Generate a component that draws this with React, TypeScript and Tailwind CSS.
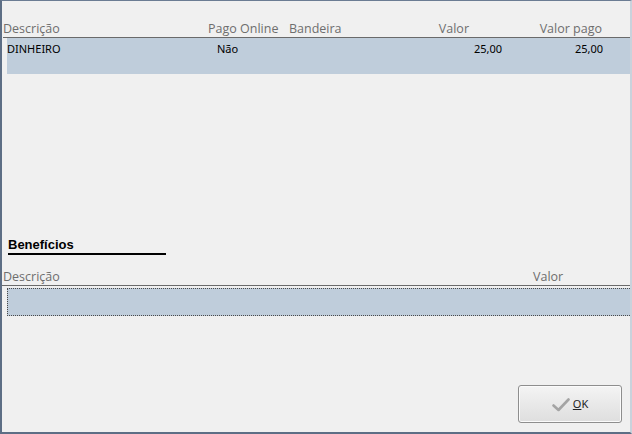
import React from 'react'

const App = () => {
  return (
    <div className="h-[434px] w-[632px] overflow-hidden bg-[#f0f0f0]">
      <div className="flex h-full w-full flex-col border-t border-r-2 border-b-2 border-l-2 border-t-[#6b7c93] border-r-[#c9d2dc] border-b-[#5d6e85] border-l-[#5d6e85] bg-[#f0f0f0]">
        {/* pagamentos grid */}
        <div className="mt-[18px] flex h-[18px] items-end pl-[1px] text-[12.5px] leading-[16px] text-[#6e6e6e] [font-family:'Open_Sans',sans-serif]">
          <div className="w-[205px]">Descrição</div>
          <div className="w-[81px]">Pago Online</div>
          <div className="w-[111px]">Bandeira</div>
          <div className="w-[69px] text-right">Valor</div>
          <div className="w-[133px] text-right">Valor pago</div>
        </div>
        <div className="ml-[1px] h-[1px] bg-[#6a6a6a]" />
        <div className="ml-[5px] flex h-[36px] bg-[#bfcddb] pt-[4px] text-[11px] leading-[14px] text-black [font-family:'Noto_Sans',sans-serif]">
          <div className="w-[210px]">DINHEIRO</div>
          <div className="w-[30px]">Não</div>
          <div className="w-[255px] text-right">25,00</div>
          <div className="w-[101px] text-right">25,00</div>
        </div>

        {/* beneficios */}
        <div className="mt-[163px] ml-[6px] w-[158px] border-b-2 border-black">
          <div className="text-[13px] leading-[16px] font-bold text-black [font-family:'Liberation_Sans',sans-serif]">
            Benefícios
          </div>
        </div>
        <div className="mt-[13px] flex h-[17px] items-end pl-[1px] text-[12.5px] leading-[16px] text-[#6e6e6e] [font-family:'Open_Sans',sans-serif]">
          <div className="w-[530px]">Descrição</div>
          <div>Valor</div>
        </div>
        <div className="h-[1px] bg-[#6a6a6a]" />
        <div className="mt-[2px] ml-[5px] h-[28px] border-t border-b border-l border-dotted border-[#4a4a4a] bg-[#bfcddb]" />

        {/* footer */}
        <div className="mt-auto mb-[9px] flex justify-end pr-[8px]">
          <button className="flex h-[38px] w-[104px] items-center justify-center gap-[3px] rounded-[3px] border border-[#8e8e8e] bg-gradient-to-b from-[#f4f4f4] to-[#dedede] pt-[1px] text-[11px] text-[#222] shadow-[inset_0_0_0_1px_#fbfbfb] [font-family:'Noto_Sans',sans-serif]">
            <svg width="18" height="14" viewBox="0 0 18 14">
              <path d="M1.5 7.5 L6.5 12 L16.5 1.5" fill="none" stroke="#a4a4a4" strokeWidth="2.6" strokeLinecap="round" strokeLinejoin="round" />
            </svg>
            <span>
              <span className="underline">O</span>K
            </span>
          </button>
        </div>
      </div>
    </div>
  )
}

export default App
